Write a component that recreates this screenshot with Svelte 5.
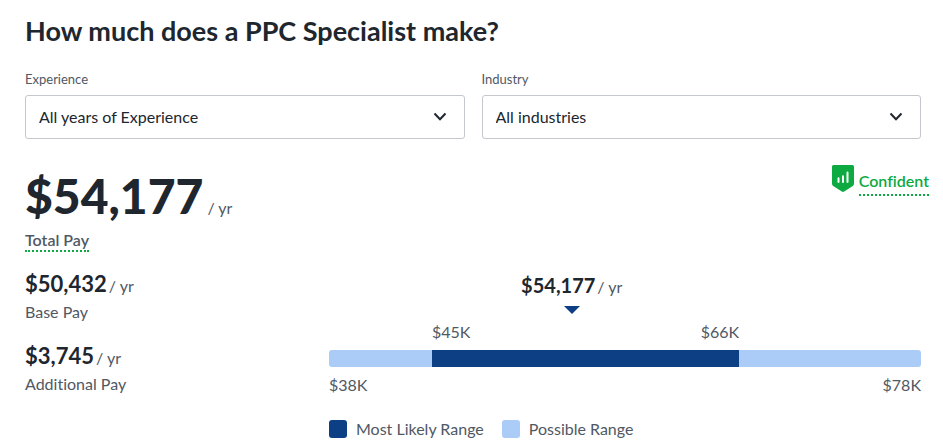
<script>
    let experience = 'All years of Experience';
    let industry = 'All industries';

    const breakdown = [
        { amount: '$50,432', label: 'Base Pay' },
        { amount: '$3,745', label: 'Additional Pay' }
    ];

    // percentages along the possible range
    const range = { from: 17.4, to: 69.3, median: 41 };
</script>

<main>
    <h1>How much does a PPC Specialist make?</h1>

    <form class="filters">
        <div class="field">
            <label for="experience">Experience</label>
            <div class="select">
                <select id="experience" bind:value={experience}>
                    <option>All years of Experience</option>
                </select>
                <svg width="14" height="10" viewBox="0 0 14 10" aria-hidden="true">
                    <path d="M1.5 1.5 7 7.2l5.500-5.700" />
                </svg>
            </div>
        </div>
        <div class="field">
            <label for="industry">Industry</label>
            <div class="select">
                <select id="industry" bind:value={industry}>
                    <option>All industries</option>
                </select>
                <svg width="14" height="10" viewBox="0 0 14 10" aria-hidden="true">
                    <path d="M1.5 1.5 7 7.2l5.500-5.700" />
                </svg>
            </div>
        </div>
    </form>

    <section class="summary">
        <div>
            <div class="pay total"><strong>$54,177</strong> <span>/ yr</span></div>
            <button type="button" class="hint">Total Pay</button>
        </div>
        <div class="confidence">
            <svg width="22" height="27" viewBox="0 0 22 27" aria-hidden="true">
                <path fill="#0caa41" d="M1.500 0h19A1.500 1.500 0 0 1 22 1.500v17.300c0 .9-.4 1.700-1.200 2.300L12.200 26.500a2.200 2.200 0 0 1-2.400 0L1.200 21.100C.4 20.500 0 19.700 0 18.800V1.500A1.500 1.500 0 0 1 1.500 0z" />
                <path fill="none" stroke="#fff" stroke-width="2" stroke-linecap="round" d="M6.500 13.200v3.800M11 11.200v5.800M15.500 7.400v9.600" />
            </svg>
            <button type="button" class="hint green">Confident</button>
        </div>
    </section>

    <section class="details">
        <div class="breakdown">
            {#each breakdown as item}
                <div>
                    <div class="pay amount"><strong>{item.amount}</strong> <span>/ yr</span></div>
                    <div>{item.label}</div>
                </div>
            {/each}
        </div>

        <div>
            <div class="median" style="margin-left: {range.median}%">
                <div class="pay value"><strong>$54,177</strong> <span>/ yr</span></div>
                <svg width="16" height="8" viewBox="0 0 16 8" aria-hidden="true">
                    <path fill="#0d3f85" d="M0 0h16L8 8z" />
                </svg>
            </div>
            <div class="ends" style="margin-left: {range.from}%; width: {range.to - range.from}%">
                <span>$45K</span>
                <span>$66K</span>
            </div>
            <div class="bar">
                <div class="likely" style="margin-left: {range.from}%; width: {range.to - range.from}%"></div>
            </div>
            <div class="ends">
                <span>$38K</span>
                <span>$78K</span>
            </div>
            <ul class="legend">
                <li><i class="swatch dark"></i>Most Likely Range</li>
                <li><i class="swatch"></i>Possible Range</li>
            </ul>
        </div>
    </section>
</main>

<style>
    :global(body) {
        margin: 0;
        background: #fff;
    }
    main {
        padding: 13px 22px 0 25px;
        font-family: Lato, "Liberation Sans", sans-serif;
        font-size: 16px;
        line-height: 24px;
        font-variant-ligatures: none;
        color: #505863;
    }
    h1 {
        margin: 0 0 21px;
        font-size: 27px;
        line-height: 36px;
        font-weight: 700;
        color: #20262e;
    }
    strong {
        font-weight: 700;
        color: #20262e;
    }
    .filters {
        display: grid;
        grid-template-columns: 1fr 1fr;
        gap: 17px;
    }
    .field label {
        display: block;
        margin-bottom: 7px;
        font-size: 13px;
        line-height: 18px;
    }
    .select {
        display: grid;
        align-items: center;
    }
    .select > * {
        grid-area: 1 / 1;
    }
    .select svg {
        justify-self: end;
        margin-right: 18px;
        fill: none;
        stroke: #20262e;
        stroke-width: 2;
        pointer-events: none;
    }
    select {
        appearance: none;
        width: 100%;
        height: 44px;
        padding: 0 40px 0 13px;
        border: 1px solid #c4c7cc;
        border-radius: 3px;
        background: #fff;
        font: inherit;
        color: #20262e;
    }
    .summary {
        display: flex;
        justify-content: space-between;
        align-items: flex-start;
        margin: 26px -8px 0 0;
    }
    .pay {
        display: flex;
        align-items: baseline;
        gap: 2px;
    }
    .total {
        gap: 4px;
    }
    .total strong {
        font-size: 48px;
        line-height: 62px;
        font-weight: 900;
    }
    .hint {
        display: block;
        margin-top: 3px;
        padding: 0;
        border: 0;
        border-bottom: 2px dotted #0caa41;
        background: none;
        font: inherit;
        font-variant-ligatures: none;
        font-weight: 600;
        line-height: 20px;
        color: inherit;
    }
    .confidence {
        display: flex;
        gap: 5px;
    }
    .confidence .hint {
        line-height: 26px;
    }
    .hint.green {
        color: #0caa41;
    }
    .details {
        display: grid;
        grid-template-columns: 304px 1fr;
        margin-top: 16px;
    }
    .breakdown {
        display: flex;
        flex-direction: column;
        gap: 16px;
    }
    .amount strong {
        font-size: 22px;
        line-height: 32px;
    }
    .median {
        display: flex;
        flex-direction: column;
        align-items: center;
        width: 120px;
        transform: translateX(-50%);
    }
    .value {
        margin-bottom: 4px;
    }
    .value strong {
        font-size: 20px;
        line-height: 34px;
    }
    .ends {
        display: flex;
        justify-content: space-between;
        line-height: 36px;
    }
    .bar {
        height: 17px;
        border-radius: 3px;
        background: #aaccf7;
        overflow: hidden;
    }
    .likely {
        height: 100%;
        background: #0d3f85;
    }
    .legend {
        display: flex;
        gap: 18px;
        margin: 15px 0 0;
        padding: 0;
        list-style: none;
        line-height: 22px;
    }
    .legend li {
        display: flex;
        align-items: center;
        gap: 9px;
    }
    .swatch {
        width: 18px;
        height: 18px;
        border-radius: 3px;
        background: #aaccf7;
    }
    .dark {
        background: #0d3f85;
    }
</style>
